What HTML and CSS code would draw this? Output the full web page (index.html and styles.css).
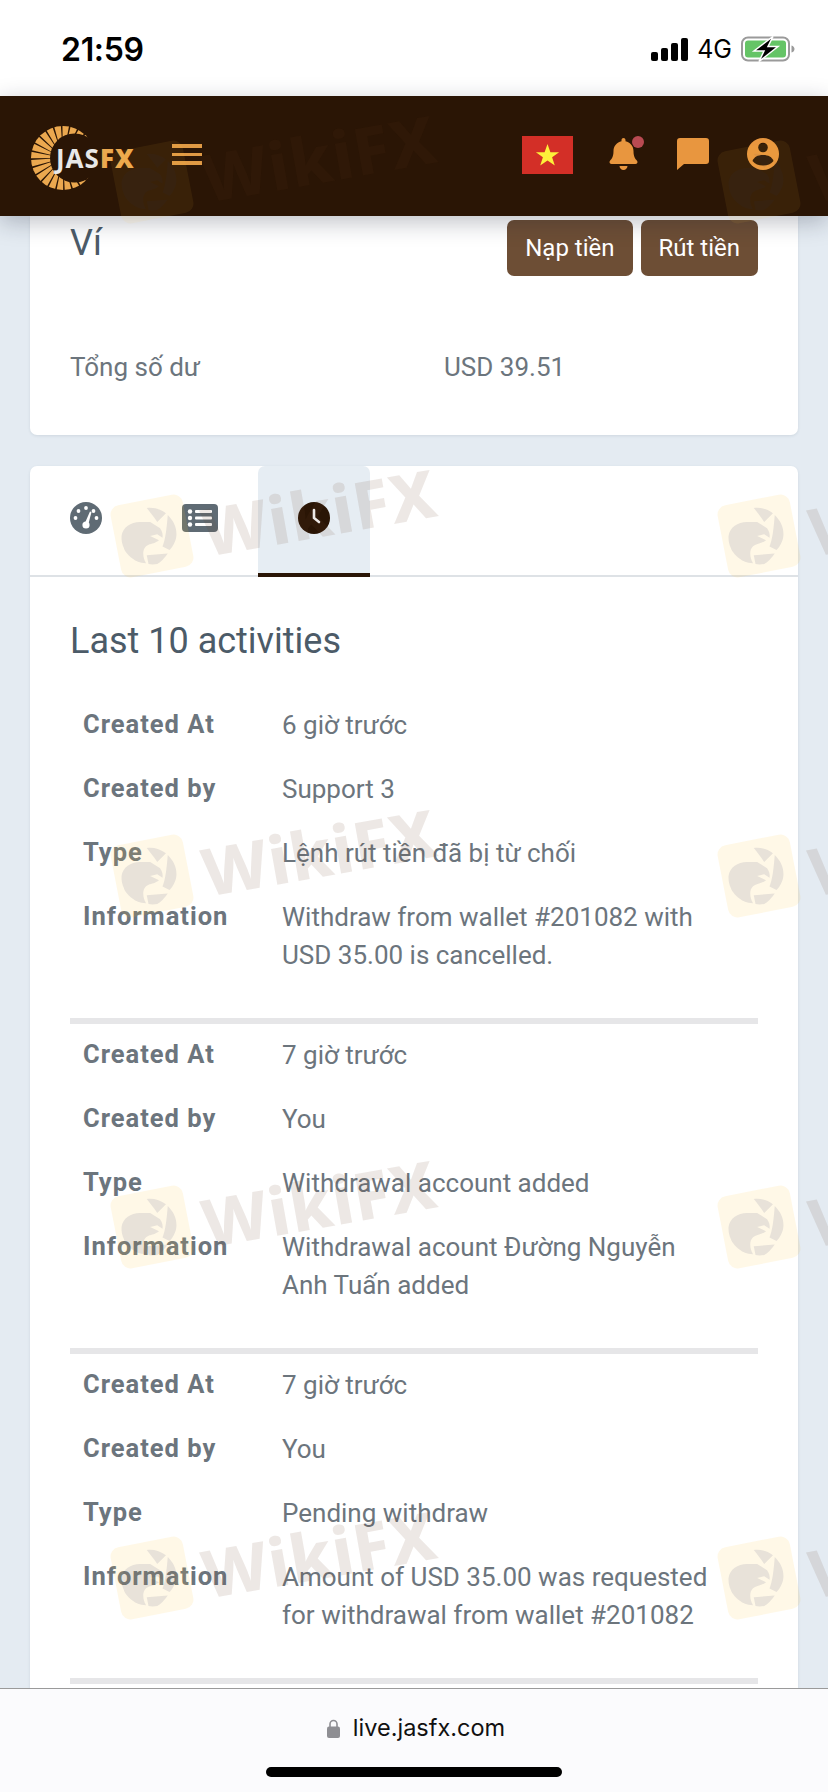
FILE: index.html
```html
<!DOCTYPE html>
<html lang="vi">
<head>
<meta charset="utf-8">
<title>JASFX</title>
<link rel="stylesheet" href="styles.css">
</head>
<body>
<div class="screen">
  <header class="status">
    <span class="time">21:59</span>
    <div class="status-right">
      <svg class="signal" viewBox="0 0 37 23"><rect x="0" y="14" width="7" height="9" rx="2"/><rect x="10" y="10" width="7" height="13" rx="2"/><rect x="20" y="5" width="7" height="18" rx="2"/><rect x="30" y="0" width="7" height="23" rx="2"/></svg>
      <span class="net">4G</span>
      <svg class="battery" viewBox="0 0 54 26"><rect x="1" y="1.5" width="47" height="23" rx="6" fill="none" stroke="#9a9a9a" stroke-width="2"/><rect x="4" y="4.500" width="41" height="17" rx="3" fill="#65c466"/><path d="M50.500 9.500c2 .5 3 2 3 3.500s-1 3-3 3.500z" fill="#9a9a9a"/><path d="M32 .5 13 15h10l-5 10.500L37 10.500H27z" fill="#000" stroke="#fff" stroke-width="1.500"/></svg>
    </div>
  </header>

  <nav class="topnav">
    <div class="nav-left">
      <div class="logo">
        <svg class="logo-ring" viewBox="0 0 64 64">
          <defs><mask id="crescent" maskUnits="userSpaceOnUse" x="0" y="0" width="64" height="64"><rect width="64" height="64" fill="#000"/><circle cx="32" cy="32" r="32" fill="#fff"/><circle cx="43.500" cy="32" r="24.500" fill="#000"/><rect x="58" y="0" width="6" height="64" fill="#000"/></mask></defs>
          <g mask="url(#crescent)"><circle cx="32" cy="32" r="22" fill="none" stroke="#eba84f" stroke-width="24" stroke-dasharray="4.600 1.100"/></g>
        </svg>
        <span class="logo-text">JAS<b>FX</b></span>
      </div>
      <span class="burger"><i></i><i></i><i></i></span>
    </div>
    <div class="nav-right">
      <svg class="flag" viewBox="0 0 51 38"><rect width="51" height="38" fill="#d32f27"/><path d="M25.500 8l2.900 8.200h8.700l-7 5.100 2.700 8.300-7.300-5.100-7.300 5.100 2.700-8.300-7-5.100h8.700z" fill="#fdf03a"/></svg>
      <span class="bell-wrap">
        <svg class="bell" viewBox="0 0 448 512"><path d="M224 512c35.320 0 63.970-28.650 63.970-64H160.030c0 35.350 28.650 64 63.970 64zm215.390-149.710c-19.320-20.760-55.470-51.990-55.470-154.290 0-77.700-54.480-139.900-127.940-155.160V32c0-17.670-14.320-32-31.980-32s-31.980 14.330-31.980 32v20.840C118.560 68.100 64.080 130.300 64.080 208c0 102.300-36.150 133.530-55.470 154.290-6 6.450-8.660 14.160-8.610 21.710.11 16.400 12.980 32 32.100 32h383.800c19.120 0 32-15.600 32.100-32 .05-7.550-2.610-15.270-8.610-21.710z"/></svg>
        <i class="dot"></i>
      </span>
      <svg class="chat" viewBox="0 0 32 32"><path d="M3 0h26a3 3 0 0 1 3 3v20a3 3 0 0 1-3 3H7l-7 6V3a3 3 0 0 1 3-3z"/></svg>
      <svg class="user" viewBox="0 0 32 32"><circle cx="16" cy="16" r="16" fill="#e8963f"/><circle cx="16" cy="9.500" r="4.800" fill="#2a1505"/><path d="M5.500 23c1.500-4 5-6 10.500-6s9 2 10.500 6c-2.500 3-6 4.600-10.500 4.600S8 26 5.500 23z" fill="#2a1505"/></svg>
    </div>
  </nav>

  <main class="content">
    <section class="card wallet">
      <div class="wallet-head">
        <h2 class="wallet-title">Ví</h2>
        <div class="actions">
          <button class="btn">Nạp tiền</button>
          <button class="btn">Rút tiền</button>
        </div>
      </div>
      <div class="balance">
        <span class="balance-label">Tổng số dư</span>
        <span>USD 39.51</span>
      </div>
    </section>

    <section class="card activity">
      <div class="tabs">
        <div class="tab">
          <svg class="tab-icon" viewBox="0 0 32 32"><circle cx="16" cy="16" r="16" fill="#5f6b74"/><g fill="#fff"><circle cx="16" cy="6" r="1.900"/><circle cx="8.500" cy="9" r="1.900"/><circle cx="5.500" cy="16" r="1.900"/><circle cx="26.500" cy="16" r="1.900"/><circle cx="23.500" cy="9" r="1.900"/><circle cx="16" cy="23" r="3.600"/><path d="M14.300 22.500 20 9.500l1.500.6-3.500 13.500z"/></g></svg>
        </div>
        <div class="tab">
          <svg class="tab-icon list" viewBox="0 0 36 28"><rect width="36" height="28" rx="4" fill="#5f6b74"/><g fill="#fff"><circle cx="8" cy="7.500" r="2.200"/><circle cx="8" cy="14" r="2.200"/><circle cx="8" cy="20.500" r="2.200"/><rect x="13" y="6" width="17" height="3" rx="1"/><rect x="13" y="12.500" width="17" height="3" rx="1"/><rect x="13" y="19" width="17" height="3" rx="1"/></g></svg>
        </div>
        <div class="tab active">
          <svg class="tab-icon" viewBox="0 0 32 32"><circle cx="16" cy="16" r="16" fill="#2a1505"/><path d="M16 8v8l5 4" fill="none" stroke="#fff" stroke-width="2.600" stroke-linecap="round"/></svg>
        </div>
      </div>

      <div class="activity-body">
        <h3 class="activity-title">Last 10 activities</h3>

        <dl class="entry">
          <dt>Created At</dt><dd>6 giờ trước</dd>
          <dt>Created by</dt><dd>Support 3</dd>
          <dt>Type</dt><dd>Lệnh rút tiền đã bị từ chối</dd>
          <dt>Information</dt><dd>Withdraw from wallet #201082 with USD 35.00 is cancelled.</dd>
        </dl>
        <hr class="rule">
        <dl class="entry">
          <dt>Created At</dt><dd>7 giờ trước</dd>
          <dt>Created by</dt><dd>You</dd>
          <dt>Type</dt><dd>Withdrawal account added</dd>
          <dt>Information</dt><dd>Withdrawal acount Đường Nguyễn Anh Tuấn added</dd>
        </dl>
        <hr class="rule">
        <dl class="entry">
          <dt>Created At</dt><dd>7 giờ trước</dd>
          <dt>Created by</dt><dd>You</dd>
          <dt>Type</dt><dd>Pending withdraw</dd>
          <dt>Information</dt><dd>Amount of USD 35.00 was requested for withdrawal from wallet #201082</dd>
        </dl>
        <hr class="rule">
      </div>
    </section>
  </main>

  <footer class="urlbar">
    <div class="url">
      <svg class="lock" viewBox="0 0 13 19"><path d="M3 8V5a3.500 3.500 0 0 1 7 0v3" fill="none" stroke="#8e8e93" stroke-width="1.600"/><rect y="7.500" width="13" height="11.500" rx="2" fill="#8e8e93"/></svg>
      <span>live.jasfx.com</span>
    </div>
    <i class="home"></i>
  </footer>

  <div class="wm-layer" aria-hidden="true">
    <div class="wm"><svg class="wm-logo" viewBox="0 0 80 80"><use href="#eagle"/></svg><span class="wm-text">WikiFX</span></div>
    <div class="wm"><svg class="wm-logo" viewBox="0 0 80 80"><use href="#eagle"/></svg><span class="wm-text">WikiFX</span></div>
    <div class="wm"><svg class="wm-logo" viewBox="0 0 80 80"><use href="#eagle"/></svg><span class="wm-text">WikiFX</span></div>
    <div class="wm"><svg class="wm-logo" viewBox="0 0 80 80"><use href="#eagle"/></svg><span class="wm-text">WikiFX</span></div>
    <div class="wm"><svg class="wm-logo" viewBox="0 0 80 80"><use href="#eagle"/></svg><span class="wm-text">WikiFX</span></div>
    <div class="wm"><svg class="wm-logo" viewBox="0 0 80 80"><use href="#eagle"/></svg><span class="wm-text">WikiFX</span></div>
    <div class="wm"><svg class="wm-logo" viewBox="0 0 80 80"><use href="#eagle"/></svg><span class="wm-text">WikiFX</span></div>
    <div class="wm"><svg class="wm-logo" viewBox="0 0 80 80"><use href="#eagle"/></svg><span class="wm-text">WikiFX</span></div>
    <div class="wm"><svg class="wm-logo" viewBox="0 0 80 80"><use href="#eagle"/></svg><span class="wm-text">WikiFX</span></div>
    <div class="wm"><svg class="wm-logo" viewBox="0 0 80 80"><use href="#eagle"/></svg><span class="wm-text">WikiFX</span></div>
  </div>

  <svg class="defs" width="0" height="0">
    <symbol id="eagle" viewBox="0 0 80 80">
      <rect x="5" y="5" width="70" height="70" rx="9" fill="#ffc83c" fill-opacity=".12" transform="rotate(-11 40 40)"/>
      <g fill="#303a70" fill-opacity=".11">
        <path d="M11 40C12 32 20 26.700 28.300 26.700L38.300 26.700 47.700 32.700C50 36 50.500 39 50 41.700L45 38.300 38.300 40 46.700 44C43 47 40 47 36.700 48.300 33 50 31.700 53 31.700 57 31.700 60 32.500 63 34.300 66 28 65.500 24.500 64 21.700 61.700 16 58 13 52 13.300 51.700 11.500 48 10.800 44 11 40z"/>
        <path d="M35 13.300C42 12.500 48 14.500 53.300 18.300L45 26.700C42 22 38 17 35 13.300z"/>
        <path d="M55 20C60 25 63.500 31 63.300 38.300 63.200 44 60.500 49.500 56.700 53.300L50 50C53 43 54 32 55 20z"/>
        <path d="M35 58.300 55 56.700C52 61 48.500 65 45 66.700 42 67.300 39 67.300 36.700 66.700z"/>
      </g>
    </symbol>
  </svg>
</div>
</body>
</html>
```

FILE: styles.css
```css
* { box-sizing: border-box; }
html, body { margin: 0; padding: 0; }
body { font-family: Roboto, "Noto Sans", sans-serif; background: #fff; }

.screen {
  position: relative;
  width: 828px;
  height: 1792px;
  display: flex;
  flex-direction: column;
  overflow: hidden;
}

/* status bar */
.status {
  height: 96px;
  flex: none;
  display: flex;
  justify-content: space-between;
  align-items: center;
  padding: 2px 33px 0 61px;
  background: #fff;
  color: #000;
}
.time { font: 600 32px Inter, sans-serif; letter-spacing: -.3px; }
.status-right { display: flex; align-items: center; gap: 9px; }
.signal { width: 37px; height: 23px; fill: #000; }
.net { font: 400 25px Inter, sans-serif; }
.battery { width: 54px; height: 26px; }

/* top nav */
.topnav {
  position: relative;
  z-index: 2;
  height: 120px;
  flex: none;
  display: flex;
  justify-content: space-between;
  align-items: flex-start;
  background: #2a1505;
  box-shadow: 0 6px 22px rgba(20, 30, 50, .28);
  padding: 30px 49px 0 31px;
}
.nav-left { display: flex; align-items: flex-start; }
.logo { position: relative; width: 103px; height: 64px; }
.logo-ring { width: 64px; height: 64px; display: block; }
.logo-text {
  position: absolute;
  left: 25px;
  top: 14px;
  font: 700 26px/36px "Noto Sans", sans-serif;
  color: #e8e8e8;
  letter-spacing: 1px;
}
.logo-text b { color: #eba84f; }
.burger { display: flex; flex-direction: column; gap: 5px; width: 30px; margin: 18px 0 0 38px; }
.burger i { display: block; height: 3.500px; background: #e09a45; }
.nav-right { display: flex; align-items: flex-start; }
.flag { width: 51px; height: 38px; margin-top: 10px; }
.bell-wrap { position: relative; margin-left: 36px; margin-top: 12px; width: 29px; height: 32px; }
.bell { display: block; width: 29px; height: 32px; fill: #e8963f; }
.dot {
  position: absolute;
  right: -6px;
  top: -2px;
  width: 12px;
  height: 12px;
  border-radius: 50%;
  background: #b94a52;
}
.chat { width: 32px; height: 32px; margin: 12px 0 0 39px; fill: #e8963f; }
.user { width: 32px; height: 32px; margin: 12px 0 0 38px; }

/* content */
.content {
  flex: 1;
  min-height: 0;
  overflow: hidden;
  background: #e4ebf2;
  padding: 0 30px;
}
.card {
  background: #fff;
  border-radius: 7px;
  box-shadow: 0 1px 3px rgba(60, 80, 100, .12);
}
.wallet { height: 219px; padding: 4px 40px 0; margin-bottom: 31px; border-radius: 0 0 7px 7px; }
.wallet-head { display: flex; justify-content: space-between; align-items: flex-start; }
.wallet-title { margin: 2px 0 0; font-weight: 400; font-size: 36px; line-height: 42px; color: #4c5b68; }
.actions { display: flex; gap: 8px; }
.btn {
  height: 56px;
  padding: 0 18px;
  border: 0;
  border-radius: 7px;
  background: #6d4e35;
  color: #fff;
  font: 400 24px Roboto, sans-serif;
}
.balance {
  display: grid;
  grid-template-columns: 374px 1fr;
  margin-top: 72px;
  font-size: 26px;
  line-height: 38px;
  color: #6c757d;
}

.activity { height: 1400px; }
.tabs { display: flex; gap: 2px; height: 111px; border-bottom: 2px solid #dee2e6; }
.tab {
  width: 112px;
  height: 111px;
  display: flex;
  justify-content: center;
  padding-top: 36px;
}
.tab.active { background: #e6edf3; border-bottom: 4px solid #2a1505; border-radius: 7px 7px 0 0; }
.tab-icon { width: 32px; height: 32px; }
.tab-icon.list { width: 36px; height: 28px; margin-top: 2px; }

.activity-body { padding: 43px 40px 0; }
.activity-title { margin: 0 0 44px; font-weight: 400; font-size: 36px; line-height: 42px; color: #4c5b68; }

.entry {
  display: grid;
  grid-template-columns: 199px 430px;
  row-gap: 26px;
  margin: 0;
  padding-left: 13px;
  font-size: 26px;
  line-height: 38px;
  color: #6c757d;
}
.entry dt { font-weight: 700; letter-spacing: 1px; font-size: 25.500px; position: relative; top: -1px; }
.entry dd { margin: 0; }
.rule { height: 6px; margin: 44px 0 12px; border: 0; background: #e6e6e8; }

/* url bar */
.urlbar {
  position: relative;
  z-index: 3;
  height: 104px;
  flex: none;
  background: #fbfbfd;
  border-top: 1px solid #9a9a9a;
  display: flex;
  flex-direction: column;
  align-items: center;
  padding-top: 21px;
}
.url { display: flex; align-items: center; gap: 13px; font: 400 23.500px/36px Inter, sans-serif; color: #111; margin-left: 4px; }
.lock { width: 13px; height: 19px; }
.home { display: block; width: 296px; height: 10px; border-radius: 5px; background: #000; margin-top: 21px; }

/* watermark overlay */
.wm-layer {
  position: absolute;
  z-index: 2;
  left: 0;
  top: 96px;
  width: 828px;
  height: 1592px;
  overflow: hidden;
  pointer-events: none;
  display: grid;
  grid-template-columns: 607px 607px;
  grid-auto-rows: 349px;
  padding: 44px 0 0 110px;
}
.wm { display: flex; align-items: flex-start; height: 84px; }
.wm:nth-child(-n+2) .wm-logo { opacity: .6; }
.wm:nth-child(-n+2) .wm-text { color: rgba(110, 65, 40, .07); }
.wm:nth-child(3), .wm:nth-child(4) { margin-top: 5px; }
.wm:nth-child(5), .wm:nth-child(6) { margin-top: -4px; }
.wm:nth-child(7), .wm:nth-child(8) { margin-top: -2px; }
.wm-logo { width: 84px; height: 84px; flex: none; }
.wm-text {
  margin: 4px 0 0 14px;
  font: 800 66px/66px "Noto Sans", sans-serif;
  letter-spacing: 1px;
  color: rgba(110, 65, 40, .12);
  transform: rotate(-10deg);
  transform-origin: left bottom;
  white-space: nowrap;
}
.defs { position: absolute; }
```
